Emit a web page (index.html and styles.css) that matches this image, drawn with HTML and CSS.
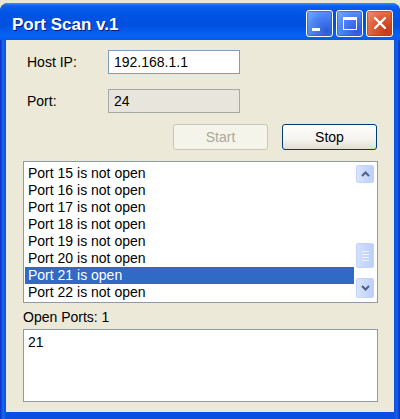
FILE: index.html
```html
<!DOCTYPE html>
<html lang="en">
<head>
<meta charset="UTF-8" />
<title>Port Scan v.1</title>
<link rel="stylesheet" href="styles.css">
</head>
<body>
  <div class="window">
    <div class="titlebar">
      <span class="title">Port Scan v.1</span>
      <div class="caption-buttons">
        <button class="cap cap-min"><span class="min-bar"></span></button>
        <button class="cap cap-max"><span class="max-box"></span></button>
        <button class="cap cap-close">
          <svg width="16" height="16" viewBox="0 0 16 16"><path d="M3 3 L13 13 M13 3 L3 13" stroke="#fff" stroke-width="2.4" stroke-linecap="round"/></svg>
        </button>
      </div>
    </div>

    <div class="client">
      <div class="form">
        <label class="lbl">Host IP:</label>
        <div class="field">192.168.1.1</div>
        <label class="lbl">Port:</label>
        <div class="field disabled">24</div>
      </div>

      <div class="actions">
        <button class="btn" disabled>Start</button>
        <button class="btn">Stop</button>
      </div>

      <div class="listbox">
        <div class="rows" id="rows"></div>
        <div class="scrollbar">
          <div class="sb-btn">
            <svg width="9" height="6" viewBox="0 0 9 6"><path d="M1 5 L4.5 1.5 L8 5" fill="none" stroke="#4d6185" stroke-width="2"/></svg>
          </div>
          <div class="sb-space"></div>
          <div class="sb-thumb"><span></span><span></span><span></span><span></span></div>
          <div class="sb-gap"></div>
          <div class="sb-btn">
            <svg width="9" height="6" viewBox="0 0 9 6"><path d="M1 1 L4.5 4.5 L8 1" fill="none" stroke="#4d6185" stroke-width="2"/></svg>
          </div>
        </div>
      </div>

      <div class="open-label">Open Ports: 1</div>
      <div class="open-box">21</div>
    </div>
  </div>

<script>
  // fill the scan log, port 21 is the one that answered
  const rows = document.getElementById('rows');
  for (let p = 15; p <= 22; p++) {
    const row = document.createElement('div');
    row.className = 'row';
    if (p === 21) {
      row.classList.add('selected');
      row.textContent = 'Port ' + p + ' is open';
    } else {
      row.textContent = 'Port ' + p + ' is not open';
    }
    rows.appendChild(row);
  }
</script>
</body>
</html>
```

FILE: styles.css
```css
body {
  margin: 0;
  padding-top: 3px;
  background-color: #e6e9d2;
  font-family: 'Liberation Sans', Arial, sans-serif;
  font-size: 14px;
  color: #000;
}

.window {
  width: 400px;
  height: 416px;
  display: flex;
  flex-direction: column;
  background: linear-gradient(to right, #0a2fc4 0px, #166aee 3px, #0b4fe0 6px, #0b4fe0 394px, #1660e8 397px, #0a2fc4 400px);
  border-radius: 8px 8px 0 0;
  overflow: hidden;
}

.titlebar {
  height: 37px;
  flex-shrink: 0;
  display: flex;
  align-items: center;
  justify-content: space-between;
  padding: 0 7px 0 12px;
  background: linear-gradient(#3d8dff 0%, #0a5eef 8%, #0054e3 30%, #0050e0 60%, #0663f5 88%, #0a5ae8 100%);
}

.title {
  color: #fff;
  font-weight: bold;
  font-size: 17px;
  padding-top: 7px;
  text-shadow: 1px 1px 0 #0a1883;
}

.caption-buttons {
  display: flex;
  gap: 3px;
  padding-top: 3px;
}

.cap {
  width: 27px;
  height: 27px;
  padding: 0;
  border: 1px solid #fff;
  border-radius: 3px;
  display: flex;
  align-items: center;
  justify-content: center;
  background: radial-gradient(circle at 80% 80%, #2b5bd8 0%, #4a84f5 55%, #7fb0ff 100%);
  box-shadow: inset 0 0 1px 1px rgba(40, 80, 200, 0.6);
}

.cap-close {
  background: radial-gradient(circle at 80% 80%, #c13a16 0%, #e0603a 55%, #f29a7c 100%);
  box-shadow: inset 0 0 1px 1px rgba(180, 50, 20, 0.6);
}

.min-bar {
  width: 8px;
  height: 3px;
  background: #fff;
  margin: 12px 8px 0 0;
}

.max-box {
  width: 12px;
  height: 9px;
  border: 1px solid #fff;
  border-top-width: 3px;
}

.client {
  flex: 1;
  margin: 0 6px 7px 6px;
  background-color: #ece9d8;
  padding: 10px 16px 10px 17px;
  display: flex;
  flex-direction: column;
}

.form {
  display: grid;
  grid-template-columns: 85px 132px;
  row-gap: 15px;
  align-items: center;
}

.lbl {
  padding-left: 4px;
}

.field {
  height: 24px;
  box-sizing: border-box;
  border: 1px solid #7f9db9;
  background: #fff;
  padding-left: 5px;
  line-height: 22px;
}

.field.disabled {
  background: #e8e6dc;
  border-color: #a7a9a6;
}

.actions {
  display: flex;
  justify-content: flex-end;
  gap: 14px;
  margin-top: 11px;
  padding-right: 1px;
}

.btn {
  width: 95px;
  height: 26px;
  font-family: inherit;
  font-size: 14px;
  color: #000;
  border: 1px solid #003c74;
  border-radius: 3px;
  background: linear-gradient(#fff 0%, #f4f3ee 60%, #e2ded0 100%);
}

.btn:disabled {
  color: #aca899;
  border-color: #c9c7ba;
  background: #f5f4ea;
}

.listbox {
  margin-top: 11px;
  height: 142px;
  box-sizing: border-box;
  border: 1px solid #8e9aa8;
  background: #fff;
  display: flex;
  padding: 3px 2px 0 1px;
}

.rows {
  flex: 1;
}

.row {
  height: 17px;
  line-height: 17px;
  padding-left: 3px;
  white-space: nowrap;
}

.row.selected {
  background: #316ac5;
  color: #fff;
}

.scrollbar {
  width: 18px;
  margin: 0 1px 4px 2px;
  display: flex;
  flex-direction: column;
}

.sb-btn {
  height: 18px;
  box-sizing: border-box;
  border: 1px solid #c3d3fd;
  border-radius: 2px;
  background: linear-gradient(to right, #d9e5fd, #bccffb);
  display: flex;
  align-items: center;
  justify-content: center;
}

.sb-btn:last-child {
  height: 20px;
}

.sb-space {
  flex: 1;
}

.sb-thumb {
  height: 25px;
  box-sizing: border-box;
  border: 1px solid #c3d3fd;
  border-radius: 2px;
  background: linear-gradient(to right, #d3e0fd, #bccffb);
  display: flex;
  flex-direction: column;
  align-items: center;
  justify-content: center;
  gap: 2px;
}

.sb-thumb span {
  width: 7px;
  height: 1px;
  background: #eef4fe;
}

.sb-gap {
  height: 10px;
}

.open-label {
  margin-top: 6px;
  height: 16px;
  line-height: 16px;
}

.open-box {
  margin-top: 4px;
  height: 73px;
  box-sizing: border-box;
  border: 1px solid #8e9aa8;
  background: #fff;
  padding: 4px 0 0 4px;
}
```
